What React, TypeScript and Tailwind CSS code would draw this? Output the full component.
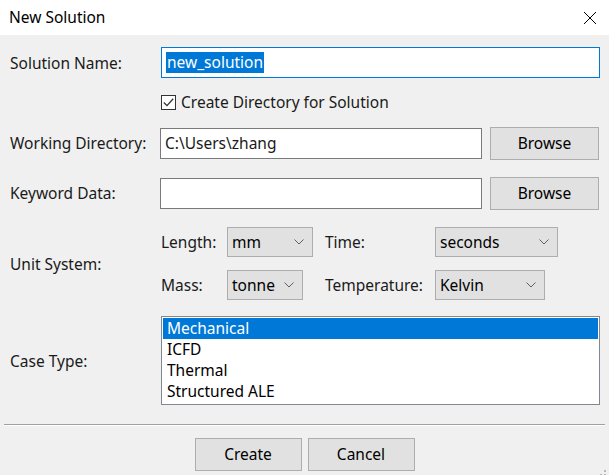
import React from "react";

const font = { fontFamily: '"Noto Sans", "Open Sans", sans-serif' };

const Select: React.FC<{ value: string; width: string }> = ({ value, width }) => (
  <div
    className={`${width} h-[30px] bg-[#e1e1e1] border border-[#adadad] flex items-center justify-between pl-[4px] pr-[8px] text-[15.5px] text-black`}
  >
    <span>{value}</span>
    <svg width="10" height="6" viewBox="0 0 10 6" fill="none">
      <path d="M0.5 0.5 L5 5 L9.5 0.5" stroke="#606060" strokeWidth="1" />
    </svg>
  </div>
);

const Button: React.FC<{ label: string; className?: string }> = ({ label, className }) => (
  <button
    className={`h-[33px] bg-[#e1e1e1] border border-[#adadad] text-[15.5px] text-black flex items-center justify-center ${className ?? ""}`}
  >
    {label}
  </button>
);

export default function App() {
  return (
    <div className="w-[609px] h-[475px] bg-[#f0f0f0] flex flex-col overflow-hidden" style={font}>
      {/* title bar */}
      <div className="h-[35px] bg-white flex items-center justify-between pl-[9px] pr-[12px] shrink-0">
        <span className="text-[15.5px] text-black">New Solution</span>
        <svg width="14" height="14" viewBox="0 0 14 14">
          <path d="M1 1 L13 13 M13 1 L1 13" stroke="#000" strokeWidth="1" />
        </svg>
      </div>

      <div className="flex flex-col pl-[10px] pr-[9px] text-[15.5px] text-[#1a1a1a] leading-[22px]">
        {/* Solution name */}
        <div className="flex items-center mt-[12px] h-[31px]">
          <span className="w-[151px]">Solution Name:</span>
          <div className="flex-1 h-[31px] bg-white border border-[#0078d7] flex items-center pl-[4px]">
            <span className="bg-[#0078d7] text-white px-[1px] leading-[21px]">new_solution</span>
          </div>
        </div>

        {/* checkbox */}
        <div className="flex items-center mt-[16px] ml-[151px] h-[16px]">
          <div className="w-[15px] h-[15px] border border-[#333] bg-white flex items-center justify-center">
            <svg width="11" height="9" viewBox="0 0 11 9" fill="none">
              <path d="M0.8 4.5 L4 7.6 L10.2 0.8" stroke="#333" strokeWidth="1.3" />
            </svg>
          </div>
          <span className="ml-[5px]">Create Directory for Solution</span>
        </div>

        {/* working directory */}
        <div className="flex items-center mt-[17px] h-[32px]">
          <span className="w-[150px]">Working Directory:</span>
          <div className="w-[322px] h-[31px] bg-white border border-[#7a7a7a] flex items-center pl-[4px]">
            C:\Users\zhang
          </div>
          <Button label="Browse" className="ml-[8px] w-[109px] h-[32px]" />
        </div>

        {/* keyword data */}
        <div className="flex items-center mt-[18px] h-[32px]">
          <span className="w-[150px]">Keyword Data:</span>
          <div className="w-[322px] h-[31px] bg-white border border-[#7a7a7a]" />
          <Button label="Browse" className="ml-[8px] w-[109px] h-[32px]" />
        </div>

        {/* unit system */}
        <div className="flex items-center mt-[18px]">
          <span className="w-[151px]">Unit System:</span>
          <div className="grid grid-cols-[66px_98px_110px_auto] gap-y-[13px] items-center">
            <span>Length:</span>
            <div className="flex">
              <Select value="mm" width="w-[86px]" />
            </div>
            <span>Time:</span>
            <Select value="seconds" width="w-[123px]" />
            <span>Mass:</span>
            <div className="flex">
              <Select value="tonne" width="w-[76px]" />
            </div>
            <span>Temperature:</span>
            <Select value="Kelvin" width="w-[110px]" />
          </div>
        </div>

        {/* case type */}
        <div className="flex items-center mt-[16px]">
          <span className="w-[151px]">Case Type:</span>
          <div className="flex-1 h-[89px] bg-white border border-[#828790] p-[1px] flex flex-col leading-[21px] text-black">
            <div className="bg-[#0078d7] text-white pl-[4px]">Mechanical</div>
            <div className="pl-[4px]">ICFD</div>
            <div className="pl-[4px]">Thermal</div>
            <div className="pl-[4px]">Structured ALE</div>
          </div>
        </div>
      </div>

      {/* separator */}
      <div className="mt-[19px] mx-[4px] h-[2px] border-t border-[#a0a0a0] border-b border-b-white" />

      {/* buttons */}
      <div className="relative flex justify-center gap-[6px] mt-[12px]">
        <Button label="Create" className="w-[107px]" />
        <Button label="Cancel" className="w-[107px]" />
        <svg className="absolute right-[2px] bottom-[-10px]" width="12" height="12" viewBox="0 0 12 12">
          <rect x="9" y="1" width="2" height="2" fill="#b8b8b8" />
          <rect x="5" y="5" width="2" height="2" fill="#b8b8b8" />
          <rect x="9" y="5" width="2" height="2" fill="#b8b8b8" />
          <rect x="1" y="9" width="2" height="2" fill="#b8b8b8" />
          <rect x="5" y="9" width="2" height="2" fill="#b8b8b8" />
          <rect x="9" y="9" width="2" height="2" fill="#b8b8b8" />
        </svg>
      </div>
    </div>
  );
}
